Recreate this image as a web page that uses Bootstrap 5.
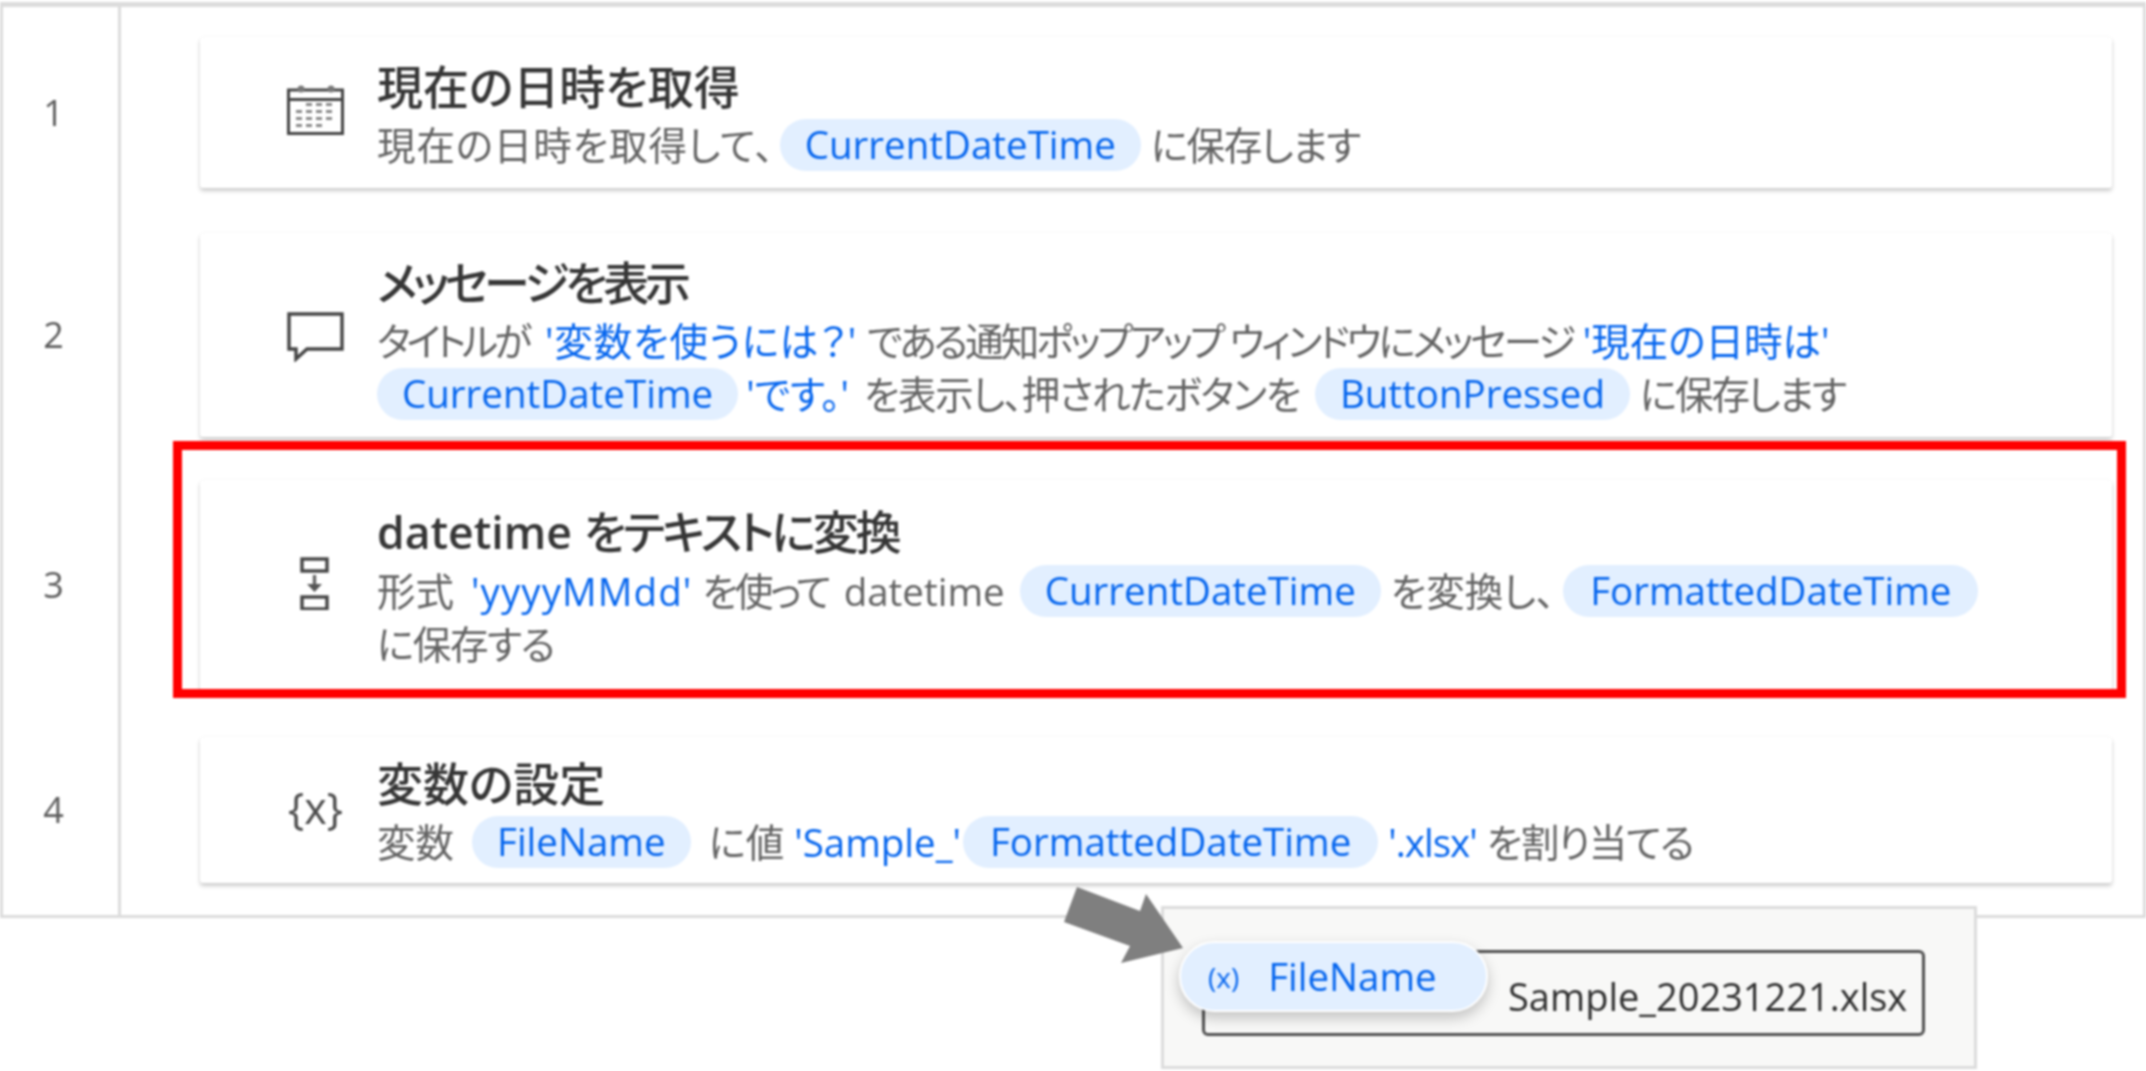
<!DOCTYPE html>
<html lang="ja">
<head>
<meta charset="utf-8">
<title>Flow</title>
<link href="https://cdn.jsdelivr.net/npm/bootstrap@5.3.0/dist/css/bootstrap.min.css" rel="stylesheet">
<style>
html,body{margin:0;background:#fff;}
body{width:2146px;height:1071px;overflow:hidden;font-family:"Open Sans","Noto Sans CJK JP",sans-serif;font-feature-settings:"palt";}
.sheet{position:relative;height:1071px;padding-top:2px;filter:blur(.8px);}
.flow-panel{height:916px;border:3px solid #dcdcdc;border-top-width:5px;border-bottom-width:3px;}
.step-a{height:211px;}.step-b{height:234px;}.step-c{height:266px;}.step-d{height:184px;}
.step-num{width:118px;border-right:3px solid #dcdcdc;color:#5c5c5c;font-size:36px;flex:none;padding-right:14px;}
.step-card{width:1912px;margin-left:79px;border:0;border-radius:3px;box-shadow:0 3px 4px rgba(0,0,0,.2),0 0 3px rgba(0,0,0,.05);background:#fff;padding-left:87px;}
.card-a{height:151px;}.card-b{height:204px;}.card-c{height:210px;}.card-d{height:146px;}
.step-icon{width:57px;margin-right:33px;flex:none;color:#444;}
.icon-cal{margin-bottom:6px;}
.icon-msg{margin-top:4px;}
.icon-conv{margin-bottom:4px;}
.icon-txt{font-size:43px;font-family:"Open Sans",sans-serif;line-height:1;text-align:center;color:#4c4c4c;margin-bottom:6px;white-space:nowrap;}
.step-body{padding-top:7px;}
.step-title{font-size:46px;line-height:54px;font-weight:500;color:#363636;margin-top:-2px;margin-bottom:6px;white-space:nowrap;}
.latin-title{font-size:44.5px;font-weight:600;}
.step-line{font-size:38.5px;line-height:53px;height:53px;color:#636363;white-space:nowrap;}
.val{color:#0565ee;}
.chip{display:inline-block;height:52px;line-height:51px;background:#e2efff;color:#0565ee;padding:0 25px;vertical-align:top;}
.chip-f{padding:0 27px;}
.tight-t{letter-spacing:-4.3px;}
.tight-x{letter-spacing:-1px;}
.tight-1{letter-spacing:-1.3px;}
.tight-2{letter-spacing:-2px;}
.tight-3{letter-spacing:-3px;}
.tight-4{letter-spacing:-4px;}
.wide-1{letter-spacing:.9px;}
.wide-2{letter-spacing:.9px;}
.wide-3{letter-spacing:1.1px;}
.gap-xxs{margin-left:2px;}
.gap-xs{margin-left:5px;}
.gap-s{margin-left:8px;}
.gap-m{margin-left:7px;}
.gap-f{margin-left:8px;}
.redbox{position:absolute;left:-27px;right:-14px;top:-39px;bottom:-8px;border:9px solid #f00;pointer-events:none;}
.insert-box{position:absolute;left:1161px;top:906px;width:816px;height:163px;background:#f8f8f7;border:3px solid #dcdcdc;}
.insert-field{position:absolute;left:38px;top:41px;width:723px;height:86px;border:3px solid #505050;border-radius:6px;font-size:38px;color:#2e2e2e;}
.field-val{position:absolute;left:303px;top:18px;line-height:50px;white-space:nowrap;}
.drag-chip{position:absolute;left:15px;top:32px;width:309px;height:71px;background:#e2efff;color:#0565ee;border:2px solid #fff;box-shadow:0 6px 14px rgba(0,0,0,.22);font-size:38.5px;}
.drag-x{font-size:28px;margin-left:27px;margin-right:29px;}
.drag-arrow{position:absolute;left:1060px;top:884px;}
</style>
</head>
<body>
<div class="sheet">
  <div class="flow-panel d-flex flex-column">
    <div class="step-a d-flex align-items-stretch">
      <div class="step-num d-flex align-items-center justify-content-center">1</div>
      <div class="d-flex align-items-center">
        <div class="card step-card card-a d-flex flex-row align-items-center">
          <svg class="step-icon icon-cal" height="50" viewBox="0 0 57 50" fill="none" stroke="#444" stroke-width="3">
            <rect x="1.5" y="5" width="54" height="43.5"/><path d="M2 14.5H55" />
            <circle cx="14" cy="4" r="3.5" fill="#777" stroke="none"/><circle cx="44" cy="4" r="3.5" fill="#777" stroke="none"/>
            <g fill="#888" stroke="none"><rect x="19" y="18" width="6" height="3"/><rect x="29" y="18" width="6" height="3"/><rect x="39" y="18" width="6" height="3"/><rect x="9" y="25" width="6" height="3"/><rect x="19" y="25" width="6" height="3"/><rect x="29" y="25" width="6" height="3"/><rect x="39" y="25" width="6" height="3"/><rect x="9" y="32" width="6" height="3"/><rect x="19" y="32" width="6" height="3"/><rect x="29" y="32" width="6" height="3"/><rect x="39" y="32" width="6" height="3"/><rect x="9" y="39" width="6" height="3"/><rect x="19" y="39" width="6" height="3"/><rect x="29" y="39" width="6" height="3"/></g>
          </svg>
          <div class="step-body">
            <div class="step-title">現在の日時を取得</div>
            <div class="step-line"><span class="wide-1">現在の日時を取得して、</span><span class="chip rounded-pill gap-xs">CurrentDateTime</span> <span class="tight-1">に保存します</span></div>
          </div>
        </div>
      </div>
    </div>
    <div class="step-b d-flex align-items-stretch">
      <div class="step-num d-flex align-items-center justify-content-center">2</div>
      <div class="d-flex align-items-center">
        <div class="card step-card card-b d-flex flex-row align-items-center">
          <svg class="step-icon icon-msg" height="50" viewBox="0 0 57 50" fill="none" stroke="#444" stroke-width="3.4">
            <path d="M2 2H55V37H20L9 47V37H2Z"/>
          </svg>
          <div class="step-body">
            <div class="step-title"><span class="tight-t">メッセージを表示</span></div>
            <div class="step-line"><span class="tight-4">タイトルが</span> <span class="val wide-2 gap-m">'変数を使うには？'</span> <span class="tight-3">である通知ポップアップ ウィンドウにメッセージ</span> <span class="val">'現在の日時は'</span></div>
            <div class="step-line"><span class="chip rounded-pill">CurrentDateTime</span><span class="val gap-s">'です。'</span> <span class="tight-1 gap-xs">を表示し、押されたボタンを</span> <span class="chip rounded-pill gap-xs">ButtonPressed</span> <span class="tight-2">に保存します</span></div>
          </div>
        </div>
      </div>
    </div>
    <div class="step-c d-flex align-items-stretch">
      <div class="step-num d-flex align-items-center justify-content-center">3</div>
      <div class="d-flex align-items-center">
        <div class="card step-card card-c d-flex flex-row align-items-center position-relative">
          <svg class="step-icon icon-conv" height="53" viewBox="0 0 57 53" fill="none" stroke="#444" stroke-width="3.4">
            <rect x="15" y="2" width="25" height="12"/><rect x="15" y="40" width="25" height="12"/>
            <path d="M27.5 18V30" stroke="#666"/><path d="M20 27H35L27.5 35Z" fill="#555" stroke="none"/>
          </svg>
          <div class="step-body">
            <div class="step-title"><span class="latin-title">datetime</span> <span class="tight-3">をテキストに変換</span></div>
            <div class="step-line">形式 <span class="val wide-3 gap-m">'yyyyMMdd'</span> <span class="tight-3">を使って</span> <span class="gap-xs">datetime</span> <span class="chip rounded-pill gap-xs">CurrentDateTime</span> を変換し、<span class="chip chip-f rounded-pill gap-f">FormattedDateTime</span></div>
            <div class="step-line"><span class="tight-1">に保存する</span></div>
          </div>
          <div class="redbox"></div>
        </div>
      </div>
    </div>
    <div class="step-d d-flex align-items-stretch">
      <div class="step-num d-flex align-items-center justify-content-center">4</div>
      <div class="d-flex align-items-center">
        <div class="card step-card card-d d-flex flex-row align-items-center">
          <div class="step-icon icon-txt">{x}</div>
          <div class="step-body">
            <div class="step-title">変数の設定</div>
            <div class="step-line">変数 <span class="chip rounded-pill gap-s">FileName</span> <span class="gap-s">に値</span> <span class="val">'Sample_'</span><span class="chip chip-f rounded-pill gap-xxs">FormattedDateTime</span> <span class="val tight-x">'.xlsx'</span> <span class="tight-1">を割り当てる</span></div>
          </div>
        </div>
      </div>
    </div>
    <div class="flex-grow-1 d-flex"><div class="step-num"></div></div>
  </div>
  <div class="insert-box">
    <div class="insert-field"><span class="field-val">Sample_20231221.xlsx</span></div>
    <div class="drag-chip rounded-pill d-flex align-items-center"><span class="drag-x">(x)</span><span>FileName</span></div>
  </div>
  <svg class="drag-arrow" width="130" height="85" viewBox="1060 884 130 85"><polygon fill="#7f7f7f" points="1077,887 1140,911 1146,894 1183,948 1121,963 1130,946 1064,922"/></svg>
</div>
<script src="https://cdn.jsdelivr.net/npm/bootstrap@5.3.0/dist/js/bootstrap.bundle.min.js"></script>
</body>
</html>
